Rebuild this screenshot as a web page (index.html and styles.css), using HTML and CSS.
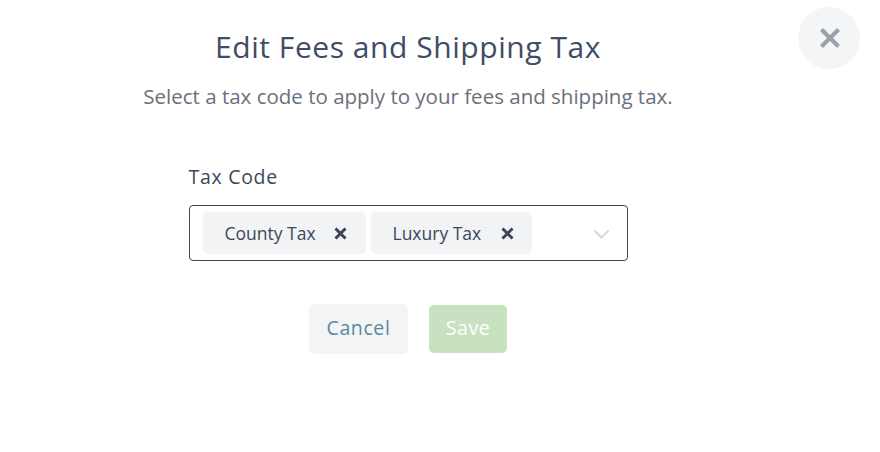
FILE: index.html
```html
<!DOCTYPE html>
<html>
<head>
<meta charset="utf-8">
<link rel="stylesheet" href="styles.css">
</head>
<body>
<div class="modal">
  <button class="close" aria-label="Close">
    <svg width="22" height="22" viewBox="0 0 22 22"><path d="M2.5 2.5L19.5 19.5M19.5 2.5L2.5 19.5" stroke="#9ba1ab" stroke-width="4.2" stroke-linecap="butt"/></svg>
  </button>
  <div class="content">
    <h1 class="title">Edit Fees and Shipping Tax</h1>
    <p class="subtitle">Select a tax code to apply to your fees and shipping tax.</p>
    <div class="field">
      <label class="label">Tax Code</label>
      <div class="select">
        <div class="chips">
          <span class="chip">County Tax<svg class="chip-x" width="13" height="13" viewBox="0 0 13 13"><path d="M1.5 1.5L11.5 11.5M11.5 1.5L1.5 11.5" stroke="#3b4558" stroke-width="3"/></svg></span>
          <span class="chip chip2">Luxury Tax<svg class="chip-x" width="13" height="13" viewBox="0 0 13 13"><path d="M1.5 1.5L11.5 11.5M11.5 1.5L1.5 11.5" stroke="#3b4558" stroke-width="3"/></svg></span>
        </div>
        <svg class="chev" width="17" height="10" viewBox="0 0 17 10"><path d="M1.5 1.5L8.5 8.5L15.5 1.5" fill="none" stroke="#d6d9dc" stroke-width="2"/></svg>
      </div>
    </div>
    <div class="actions">
      <button class="btn cancel">Cancel</button>
      <button class="btn save">Save</button>
    </div>
  </div>
</div>
</body>
</html>
```
FILE: styles.css
```css
* { box-sizing: border-box; }
html, body { margin: 0; padding: 0; background: #fff; }
body { font-family: "Open Sans", "Noto Sans", sans-serif; width: 880px; height: 452px; overflow: hidden; }
.modal { position: relative; width: 880px; height: 452px; }
.close {
  position: absolute; left: 798px; top: 7px;
  width: 62px; height: 62px; border-radius: 50%;
  background: #f4f5f7; border: none; padding: 0 0 0 2px;
  display: flex; align-items: center; justify-content: center;
}
.content { width: 816px; display: flex; flex-direction: column; align-items: center; padding-top: 29px; }
.title { margin: 0; font-size: 30px; font-weight: 400; color: #414c67; line-height: 36px; letter-spacing: 0.55px; }
.subtitle { margin: 19px 0 0; font-size: 20.5px; color: #6b7079; line-height: 24px; }
.field { margin-top: 57px; width: 439px; }
.label { display: block; font-size: 19.5px; color: #3d475b; line-height: 24px; letter-spacing: 0.7px; }
.select {
  margin-top: 16px; height: 56px; border: 1px solid #3d4452; border-radius: 4px;
  display: flex; align-items: center; padding: 0 17px 0 13px;
}
.chips { flex: 1; display: flex; gap: 5px; }
.chip {
  height: 42px; background: #f1f3f5; border-radius: 5px;
  display: inline-flex; align-items: center; justify-content: space-between;
  padding: 0 19px 0 22px; font-size: 17.5px; color: #3d475b; width: 163px;
}
.chip2 { width: 161px; padding-right: 18px; }
.chev { margin-top: 1px; }
.actions { margin-top: 43px; display: flex; align-items: center; gap: 21px; }
.btn { border: none; font-family: inherit; font-size: 19.5px; letter-spacing: 0.6px; border-radius: 5px; padding: 0 0 4px; }
.cancel { width: 99px; height: 50px; background: #f2f4f6; color: #5b88a1; }
.save { width: 78px; height: 48px; background: #c8e2c0; color: #fff; }
```
